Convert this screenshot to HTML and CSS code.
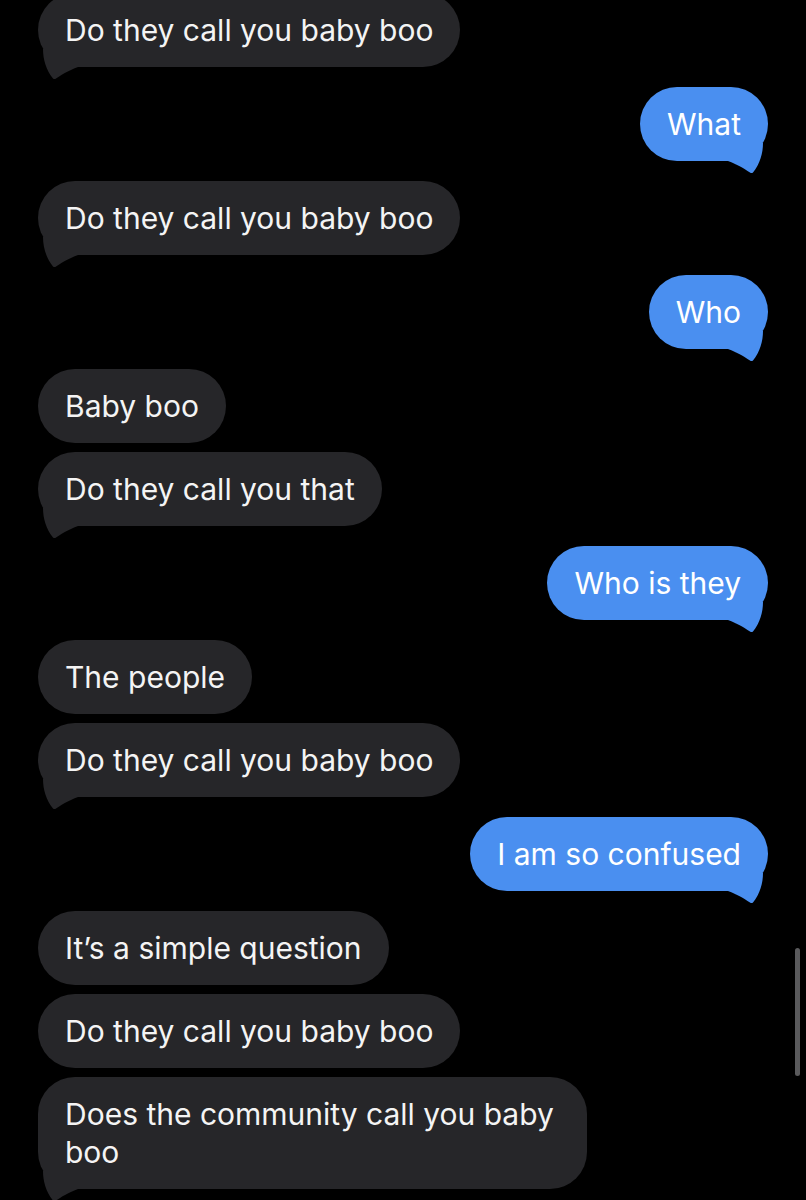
FILE: index.html
```html
<!DOCTYPE html>
<html lang="en">

<head>
    <meta charset="UTF-8">
    <meta name="viewport" content="width=device-width, initial-scale=1.0">
    <title>Messages</title>
    <link rel="stylesheet" href="styles.css">
</head>

<body>
    <main class="thread">
        <div class="msg in tail first">Do they call you baby boo<svg class="tip" viewBox="0 0 44 30"><path d="M5 0 C5 10 8 21 15 29.5 Q16.5 30.5 18 29.5 C22 27 29 22 40 18 L40 0 Z"/></svg></div>
        <div class="msg out tail">What<svg class="tip" viewBox="0 0 44 30"><path d="M5 0 C5 10 8 21 15 29.5 Q16.5 30.5 18 29.5 C22 27 29 22 40 18 L40 0 Z"/></svg></div>
        <div class="msg in tail">Do they call you baby boo<svg class="tip" viewBox="0 0 44 30"><path d="M5 0 C5 10 8 21 15 29.5 Q16.5 30.5 18 29.5 C22 27 29 22 40 18 L40 0 Z"/></svg></div>
        <div class="msg out tail">Who<svg class="tip" viewBox="0 0 44 30"><path d="M5 0 C5 10 8 21 15 29.5 Q16.5 30.5 18 29.5 C22 27 29 22 40 18 L40 0 Z"/></svg></div>
        <div class="msg in">Baby boo</div>
        <div class="msg in tail cont">Do they call you that<svg class="tip" viewBox="0 0 44 30"><path d="M5 0 C5 10 8 21 15 29.5 Q16.5 30.5 18 29.5 C22 27 29 22 40 18 L40 0 Z"/></svg></div>
        <div class="msg out tail">Who is they<svg class="tip" viewBox="0 0 44 30"><path d="M5 0 C5 10 8 21 15 29.5 Q16.5 30.5 18 29.5 C22 27 29 22 40 18 L40 0 Z"/></svg></div>
        <div class="msg in">The people</div>
        <div class="msg in tail cont">Do they call you baby boo<svg class="tip" viewBox="0 0 44 30"><path d="M5 0 C5 10 8 21 15 29.5 Q16.5 30.5 18 29.5 C22 27 29 22 40 18 L40 0 Z"/></svg></div>
        <div class="msg out tail">I am so confused<svg class="tip" viewBox="0 0 44 30"><path d="M5 0 C5 10 8 21 15 29.5 Q16.5 30.5 18 29.5 C22 27 29 22 40 18 L40 0 Z"/></svg></div>
        <div class="msg in">It’s a simple question</div>
        <div class="msg in cont">Do they call you baby boo</div>
        <div class="msg in tail cont">Does the community call you baby boo<svg class="tip" viewBox="0 0 44 30"><path d="M5 0 C5 10 8 21 15 29.5 Q16.5 30.5 18 29.5 C22 27 29 22 40 18 L40 0 Z"/></svg></div>
    </main>
    <div class="scrollbar"></div>
</body>

</html>
```

FILE: styles.css
```css
body {
    margin: 0;
    background-color: #000;
    height: 1200px;
    overflow: hidden;
    font-family: Inter, 'Noto Sans', sans-serif;
}

.thread {
    display: flex;
    flex-direction: column;
    padding: 0 38px;
    margin-top: -27px;
}

.msg {
    position: relative;
    margin-top: 20px;
    max-width: 495px;
    padding: 18px 27px;
    border-radius: 37px;
    font-size: 30px;
    line-height: 38px;
    color: #f4f4f4;
}

.msg.cont {
    margin-top: 9px;
}

.in {
    align-self: flex-start;
    background-color: #262629;
}

.out {
    align-self: flex-end;
    background-color: #4a8ff0;
    color: #fff;
}

.tip {
    position: absolute;
    bottom: -12px;
    width: 44px;
    height: 30px;
}

.in .tip {
    left: 0;
    fill: #262629;
}

.out .tip {
    right: 0;
    fill: #4a8ff0;
    transform: scaleX(-1);
}

.scrollbar {
    position: absolute;
    top: 948px;
    right: 6px;
    width: 5px;
    height: 128px;
    border-radius: 3px;
    background-color: #5a5a5c;
}
```
